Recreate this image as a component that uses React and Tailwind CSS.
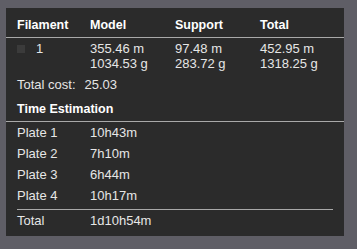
const filament = [{ id: 1, model: ["355.46 m", "1034.53 g"], support: ["97.48 m", "283.72 g"], total: ["452.95 m", "1318.25 g"] }];

const plates = [
  { name: "Plate 1", time: "10h43m" },
  { name: "Plate 2", time: "7h10m" },
  { name: "Plate 3", time: "6h44m" },
  { name: "Plate 4", time: "10h17m" },
];

export default function App() {
  return (
    <div
      className="w-[357px] h-[249px] bg-[#5f5e66] pt-[8px] pl-[6px] overflow-hidden"
      style={{ fontFamily: '"Liberation Sans", Arial, sans-serif' }}
    >
      <div className="w-[338px] h-[228px] bg-[#2b2b2b] text-[#e6e6e6] text-[13px]">
        {/* header */}
        <div className="grid grid-cols-[73px_85px_85px_1fr] pl-[11px] pt-[9px] pb-[4px] border-b border-[#a9a9a9] font-bold text-[12.5px] leading-[16px] text-white">
          <div>Filament</div>
          <div>Model</div>
          <div>Support</div>
          <div>Total</div>
        </div>

        {filament.map((f) => (
          <div key={f.id} className="grid grid-cols-[73px_85px_85px_1fr] pl-[11px] pt-[2.5px] leading-[15px]">
            <div className="flex items-start gap-[11px]">
              <span className="mt-[4px] w-[8px] h-[8px] bg-[#3b3b3b]" />
              <span>{f.id}</span>
            </div>
            <div>
              <div>{f.model[0]}</div>
              <div>{f.model[1]}</div>
            </div>
            <div>
              <div>{f.support[0]}</div>
              <div>{f.support[1]}</div>
            </div>
            <div>
              <div>{f.total[0]}</div>
              <div>{f.total[1]}</div>
            </div>
          </div>
        ))}

        <div className="pl-[11px] mt-[6.5px] leading-[16px] flex gap-[9px]">
          <span>Total cost:</span>
          <span>25.03</span>
        </div>

        <div className="pl-[11px] mt-[7.5px] pb-[4px] leading-[16px] font-bold text-[12.5px] text-white border-b border-[#a9a9a9]">
          Time Estimation
        </div>

        <div className="pt-[0.5px]">
          {plates.map((p) => (
            <div key={p.name} className="grid grid-cols-[73px_1fr] pl-[11px] leading-[21px]">
              <div>{p.name}</div>
              <div>{p.time}</div>
            </div>
          ))}
        </div>

        <div className="ml-[11px] w-[316px] mt-[2.5px] border-t border-[#a9a9a9]" />
        <div className="grid grid-cols-[73px_1fr] pl-[11px] leading-[21px]">
          <div>Total</div>
          <div>1d10h54m</div>
        </div>
      </div>
    </div>
  );
}
